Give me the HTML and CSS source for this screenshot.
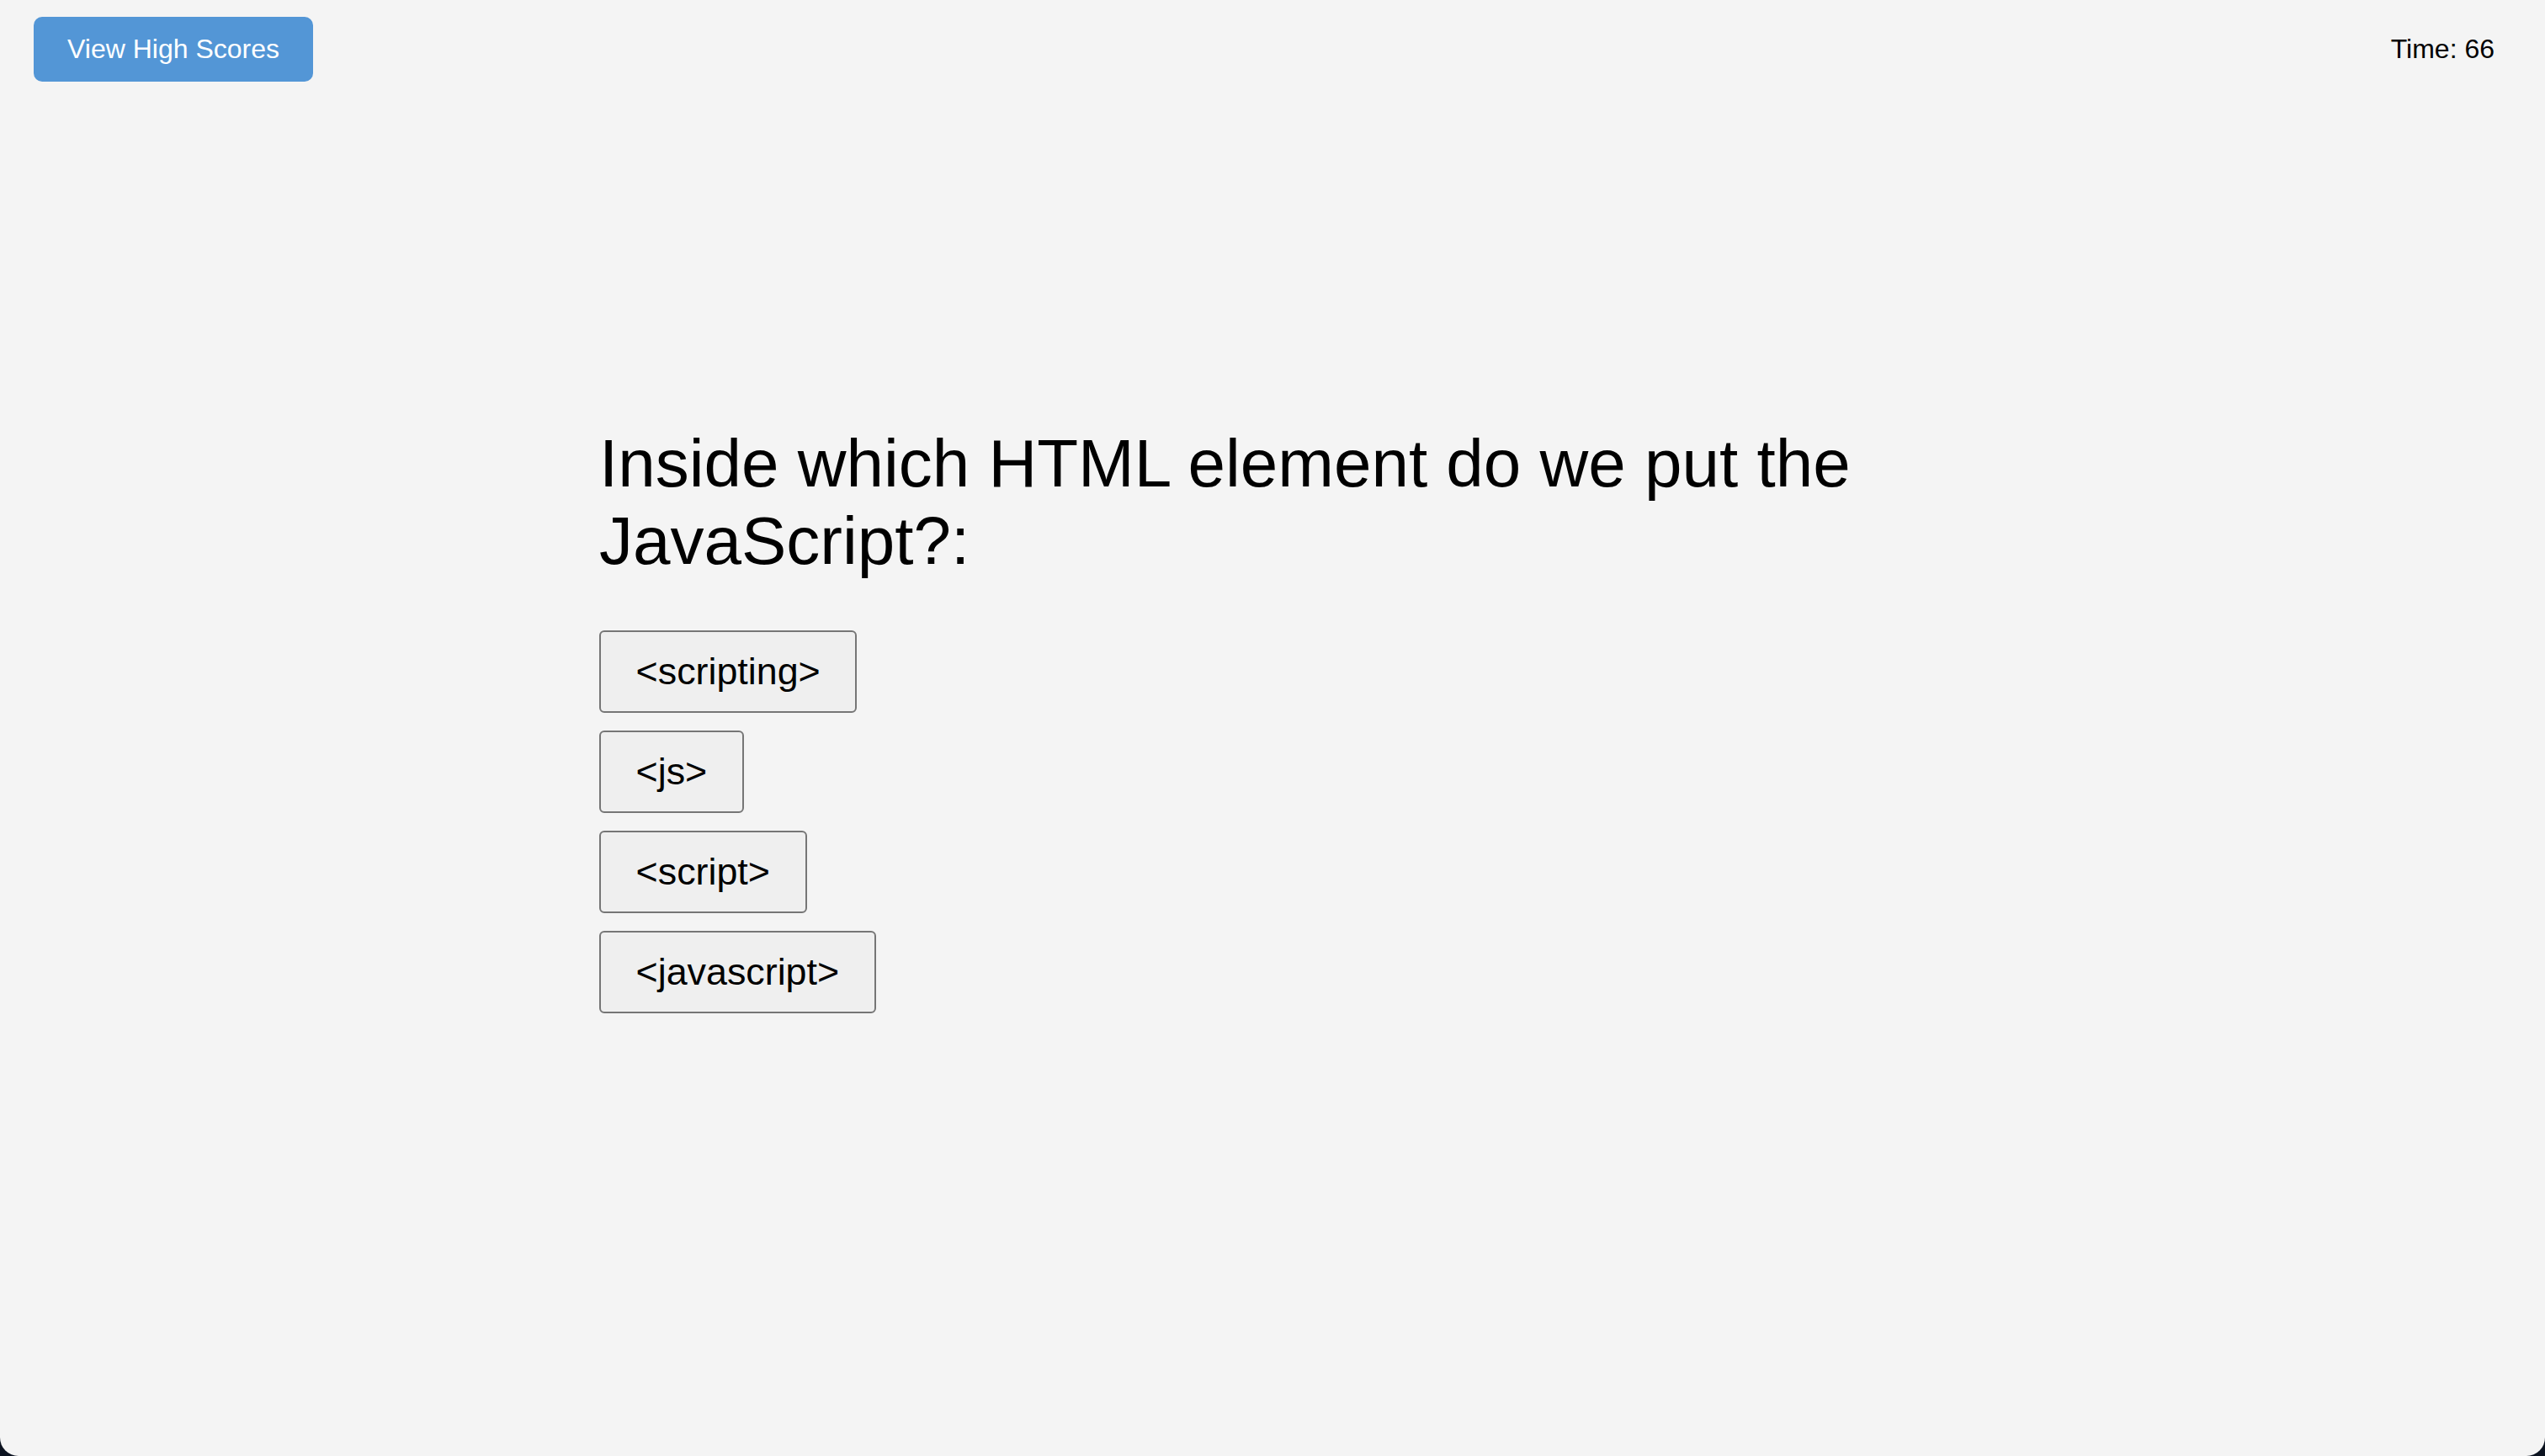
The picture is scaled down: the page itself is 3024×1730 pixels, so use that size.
FILE: index.html
```html
<!DOCTYPE html>
<html lang="en">
<head>
<meta charset="utf-8">
<title>Code Quiz</title>
<link rel="stylesheet" href="styles.css">
</head>
<body>
<div class="page">
  <header class="topbar">
    <button class="scores-btn" type="button">View High Scores</button>
    <div class="timer">Time: 66</div>
  </header>
  <main class="quiz">
    <h1 class="question">Inside which HTML element do we put the JavaScript?:</h1>
    <div class="choices">
      <button class="choice" type="button">&lt;scripting&gt;</button>
      <button class="choice" type="button">&lt;js&gt;</button>
      <button class="choice" type="button">&lt;script&gt;</button>
      <button class="choice" type="button">&lt;javascript&gt;</button>
    </div>
  </main>
</div>
</body>
</html>
```
FILE: styles.css
```css
html {
  margin: 0;
  padding: 0;
  background: #0c1320;
}
body {
  margin: 0;
  padding: 0;
  font-family: "Liberation Sans", Arial, Helvetica, sans-serif;
  color: #000;
}
.page {
  box-sizing: border-box;
  height: 100vh;
  background: #f4f4f4;
  border-radius: 0 0 22px 22px;
  overflow: hidden;
}
.topbar {
  display: flex;
  justify-content: space-between;
  align-items: center;
  padding: 20px 60px 0 40px;
}
.scores-btn {
  font-family: "Liberation Sans", Arial, Helvetica, sans-serif;
  font-size: 32px;
  line-height: 37px;
  color: #fff;
  background: #5396d6;
  border: none;
  border-radius: 10px;
  padding: 20px 40px;
  margin: 0;
}
.timer {
  font-size: 32px;
  line-height: 37px;
}
.quiz {
  width: 1600px;
  margin: 0 auto;
  padding-top: 408px;
}
.question {
  font-size: 80px;
  font-weight: 400;
  line-height: 92px;
  margin: 0 0 60px 0;
}
.choices {
  display: flex;
  flex-direction: column;
  align-items: flex-start;
  gap: 21.5px;
}
.choice {
  font-family: "Liberation Sans", Arial, Helvetica, sans-serif;
  font-size: 44.8px;
  line-height: 51.5px;
  color: #000;
  background: #efefef;
  border: 2px solid #767676;
  border-radius: 6px;
  padding: 21px 41.6px;
  margin: 0;
}
```
